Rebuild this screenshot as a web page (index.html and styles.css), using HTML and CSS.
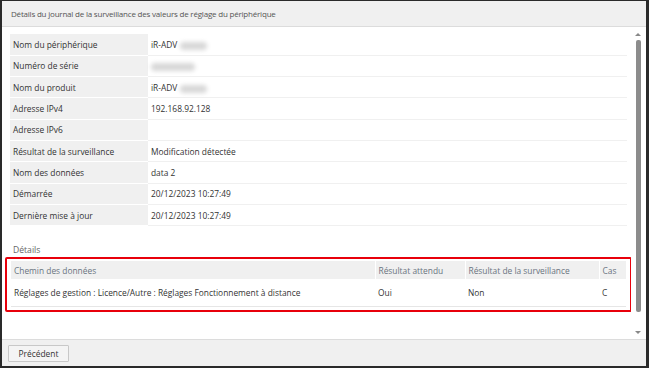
FILE: index.html
```html
<!DOCTYPE html>
<html lang="fr">
<head>
  <meta charset="UTF-8" />
  <title>Détails du journal</title>
  <link rel="stylesheet" href="styles.css">
</head>
<body>
  <div class="frame">
    <div class="titlebar">Détails du journal de la surveillance des valeurs de réglage du périphérique</div>

    <div class="content">
      <div class="scroll-body">
        <table class="info">
          <tr><th>Nom du périphérique</th><td>iR-ADV <span class="blur short"></span></td></tr>
          <tr><th>Numéro de série</th><td><span class="blur long"></span></td></tr>
          <tr><th>Nom du produit</th><td>iR-ADV <span class="blur short"></span></td></tr>
          <tr><th>Adresse IPv4</th><td>192.168.92.128</td></tr>
          <tr><th>Adresse IPv6</th><td></td></tr>
          <tr><th>Résultat de la surveillance</th><td>Modification détectée</td></tr>
          <tr><th>Nom des données</th><td>data 2</td></tr>
          <tr><th>Démarrée</th><td>20/12/2023 10:27:49</td></tr>
          <tr><th>Dernière mise à jour</th><td>20/12/2023 10:27:49</td></tr>
        </table>

        <h3 class="section-title">Détails</h3>

        <div class="highlight">
          <table class="details">
            <thead>
              <tr>
                <th class="col-path">Chemin des données</th>
                <th class="col-expected">Résultat attendu</th>
                <th class="col-result">Résultat de la surveillance</th>
                <th class="col-case">Cas</th>
              </tr>
            </thead>
            <tbody>
              <tr>
                <td>Réglages de gestion : Licence/Autre : Réglages Fonctionnement à distance</td>
                <td>Oui</td>
                <td>Non</td>
                <td>C</td>
              </tr>
            </tbody>
          </table>
        </div>
      </div>

      <div class="scrollbar">
        <span class="arrow up"></span>
        <span class="thumb"></span>
        <span class="arrow down"></span>
      </div>
    </div>

    <div class="footer">
      <button class="btn">Précédent</button>
    </div>
  </div>
</body>
</html>
```

FILE: styles.css
```css
* {
  margin: 0;
  padding: 0;
  box-sizing: border-box;
}
body {
  font-family: 'Open Sans', 'Noto Sans', sans-serif;
  font-size: 8.4px;
  color: #333;
  background: #fff;
}
.frame {
  width: 649px;
  height: 368px;
  display: flex;
  flex-direction: column;
  border: 1px solid #2a2a2a;
  border-left-width: 2px;
  border-right-width: 3px;
  border-bottom-width: 2px;
  background: #fff;
}
.titlebar {
  height: 26px;
  flex: none;
  display: flex;
  align-items: center;
  padding-left: 9px;
  background: #f0f0f0;
  border-bottom: 1px solid #dcdcdc;
  color: #555;
  font-size: 8px;
  letter-spacing: -0.2px;
}
.content {
  flex: 1;
  display: flex;
  min-height: 0;
}
.scroll-body {
  flex: 1;
  padding: 7px 4px 0 8px;
  overflow: hidden;
}
.info {
  width: 100%;
  border-collapse: collapse;
}
.info th,
.info td {
  height: 21.33px;
  text-align: left;
  font-weight: normal;
  border-bottom: 1px solid #fff;
  padding: 0 0 0 3px;
  vertical-align: middle;
}
.info th {
  width: 138px;
  background: #f0f0f0;
}
.info td {
  border-bottom-color: #f0f0f0;
}
.blur {
  display: inline-block;
  height: 8px;
  vertical-align: middle;
  background: #d8d8d8;
  border-radius: 4px;
  filter: blur(2px);
}
.blur.short {
  width: 27px;
}
.blur.long {
  width: 44px;
}
.section-title {
  font-weight: normal;
  font-size: 8.6px;
  color: #666;
  margin: 17px 0 0 3px;
  height: 14px;
  line-height: 14px;
}
.highlight {
  margin: 0 -5px 0 -5px;
  border: 2px solid #e8000b;
  border-radius: 2px;
  padding: 2px 4px 3px 4px;
}
.details {
  width: 100%;
  border-collapse: collapse;
}
.details th {
  height: 18px;
  background: #f0f0f0;
  color: #6a7480;
  font-weight: normal;
  text-align: left;
  padding-left: 3px;
  border-left: 1px solid #fff;
}
.details th:first-child {
  border-left: none;
}
.details td {
  height: 27px;
  padding-left: 3px;
  border-bottom: 1px solid #e6e6e6;
}
.col-expected {
  width: 90px;
}
.col-result {
  width: 134px;
}
.col-case {
  width: 27px;
}
.scrollbar {
  width: 14px;
  flex: none;
  display: flex;
  flex-direction: column;
  align-items: center;
  padding: 6px 0 5px;
  margin-right: 1px;
}
.arrow {
  width: 0;
  height: 0;
  border-left: 3px solid transparent;
  border-right: 3px solid transparent;
}
.arrow.up {
  border-bottom: 3px solid #888;
}
.arrow.down {
  border-top: 3px solid #888;
}
.thumb {
  width: 5px;
  flex: 1;
  background: #8c8c8c;
  border-radius: 2px;
  margin: 4px 0 19px;
}
.footer {
  height: 27px;
  flex: none;
  background: #f0f0f0;
  border-top: 1px solid #dcdcdc;
  padding: 5px 0 0 6px;
}
.btn {
  width: 61px;
  height: 17px;
  font-family: inherit;
  font-size: 8.4px;
  color: #333;
  background: #f4f4f4;
  border: 1px solid #c8c8c8;
  border-radius: 1px;
}
```
